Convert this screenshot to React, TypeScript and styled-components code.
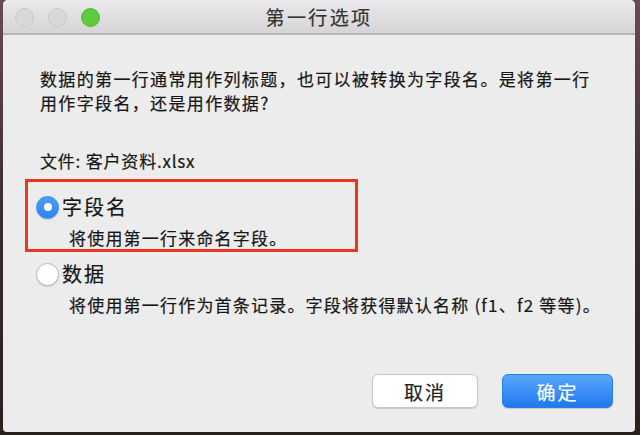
import React from 'react'
import styled, { createGlobalStyle } from 'styled-components'

// global page reset
const GlobalStyle = createGlobalStyle`
    html, body {
        margin: 0;
        padding: 0;
        width: 640px;
        height: 435px;
        overflow: hidden;
        background: linear-gradient(180deg, #6b4a52 0%, #3a2c2a 50%, #2a211d 100%);
    }
    * {
        box-sizing: border-box;
    }
`;

const Stage = styled.div`
    display: flex;
    flex-direction: row;
    align-items: flex-start;
    padding-left: 3px;
    width: 640px;
    height: 435px;
    font-family: "Noto Sans CJK SC", "Noto Sans", sans-serif;
    color: #161616;
`;

const Window = styled.div`
    display: flex;
    flex-direction: column;
    width: 632px;
    height: 432px;
    background: #ececec;
    border-radius: 5px 5px 4px 4px;
    overflow: hidden;
`;

const TitleBar = styled.div`
    position: relative;
    display: flex;
    flex-direction: row;
    align-items: center;
    justify-content: center;
    height: 35px;
    flex-shrink: 0;
    background: linear-gradient(180deg, #ebe9eb 0%, #d6d4d6 100%);
    border-bottom: 2px solid #b9b7b9;
`;

const Lights = styled.div`
    position: absolute;
    left: 12px;
    top: 8px;
    display: flex;
    flex-direction: row;
    gap: 14px;
`;

const Light = styled.span<{ $color: string; $border: string }>`
    display: block;
    width: 19px;
    height: 19px;
    border-radius: 50%;
    background: ${p => p.$color};
    border: 1px solid ${p => p.$border};
`;

const Title = styled.div`
    font-size: 19px;
    letter-spacing: 2.4px;
    color: #333333;
    line-height: 24px;
    -webkit-text-stroke: 0.2px currentColor;
`;

const Content = styled.div`
    display: flex;
    flex-direction: column;
    flex: 1;
    padding: 32px 22px 24px 37px;
    -webkit-text-stroke: 0.2px currentColor;
`;

const Message = styled.p`
    margin: 0;
    width: 562px;
    font-size: 17px;
    letter-spacing: 1.35px;
    line-height: 24px;
`;

const FileLine = styled.p`
    margin: 34px 0 0 0;
    font-size: 17px;
    letter-spacing: 0.8px;
    line-height: 24px;
`;

const Highlight = styled.div`
    margin: 6px 0 0 -15px;
    width: 333px;
    height: 73px;
    border: 3px solid #ec3520;
    padding: 12px 0 0 8px;
    -webkit-text-stroke: 0;
`;

const Option = styled.div<{ $indent: number }>`
    display: grid;
    grid-template-columns: 23px auto;
    column-gap: 3px;
    row-gap: 6px;
    align-items: center;
    margin-left: ${p => p.$indent}px;
    -webkit-text-stroke: 0.2px currentColor;
`;

const Radio = styled.span<{ $checked?: boolean }>`
    display: flex;
    align-items: center;
    justify-content: center;
    width: 23px;
    height: 23px;
    border-radius: 50%;
    background: ${p => (p.$checked ? 'linear-gradient(180deg, #4c9cf8 0%, #2f84f2 100%)' : '#ffffff')};
    border: 1px solid ${p => (p.$checked ? '#3a89ef' : '#b9b9b9')};
    box-shadow: 0 1px 1px rgba(0, 0, 0, 0.12);

    &::after {
        content: '';
        display: ${p => (p.$checked ? 'block' : 'none')};
        width: 8px;
        height: 8px;
        border-radius: 50%;
        background: #ffffff;
    }
`;

const OptionLabel = styled.span`
    font-size: 20px;
    letter-spacing: 2px;
    line-height: 26px;
`;

const OptionNote = styled.span`
    grid-column: 2;
    margin-left: 7px;
    font-size: 17px;
    letter-spacing: 1.2px;
    line-height: 24px;
`;

const Buttons = styled.div`
    display: flex;
    flex-direction: row;
    justify-content: flex-end;
    gap: 24px;
    margin-top: auto;
`;

const Button = styled.button<{ $primary?: boolean }>`
    display: flex;
    align-items: center;
    justify-content: center;
    width: ${p => (p.$primary ? 111 : 106)}px;
    height: 34px;
    padding: 0;
    border-radius: 6px;
    font-family: inherit;
    font-size: 19px;
    letter-spacing: 2px;
    color: ${p => (p.$primary ? '#ffffff' : '#222222')};
    background: ${p => (p.$primary ? 'linear-gradient(180deg, #5aa8fa 0%, #1f78ef 100%)' : '#ffffff')};
    border: 1px solid ${p => (p.$primary ? '#2a7ee8' : '#c6c6c6')};
    box-shadow: 0 1px 1px rgba(0, 0, 0, 0.15);
`;

export const App: React.FC = () => {
    return (
        <Stage>
            <GlobalStyle />
            <Window>
                <TitleBar>
                    <Lights>
                        <Light $color="#d9d7d9" $border="#c9c7c9" />
                        <Light $color="#d9d7d9" $border="#c9c7c9" />
                        <Light $color="#5ccb3c" $border="#4fb632" />
                    </Lights>
                    <Title>第一行选项</Title>
                </TitleBar>
                <Content>
                    <Message>数据的第一行通常用作列标题，也可以被转换为字段名。是将第一行用作字段名，还是用作数据?</Message>
                    <FileLine>文件: 客户资料.xlsx</FileLine>
                    <Highlight>
                        <Option $indent={0}>
                            <Radio $checked />
                            <OptionLabel>字段名</OptionLabel>
                            <OptionNote>将使用第一行来命名字段。</OptionNote>
                        </Option>
                    </Highlight>
                    <Option $indent={-4} style={{ marginTop: 9 }}>
                        <Radio />
                        <OptionLabel>数据</OptionLabel>
                        <OptionNote>将使用第一行作为首条记录。字段将获得默认名称 (f1、f2 等等)。</OptionNote>
                    </Option>
                    <Buttons>
                        <Button>取消</Button>
                        <Button $primary>确定</Button>
                    </Buttons>
                </Content>
            </Window>
        </Stage>
    )
}

export default App
